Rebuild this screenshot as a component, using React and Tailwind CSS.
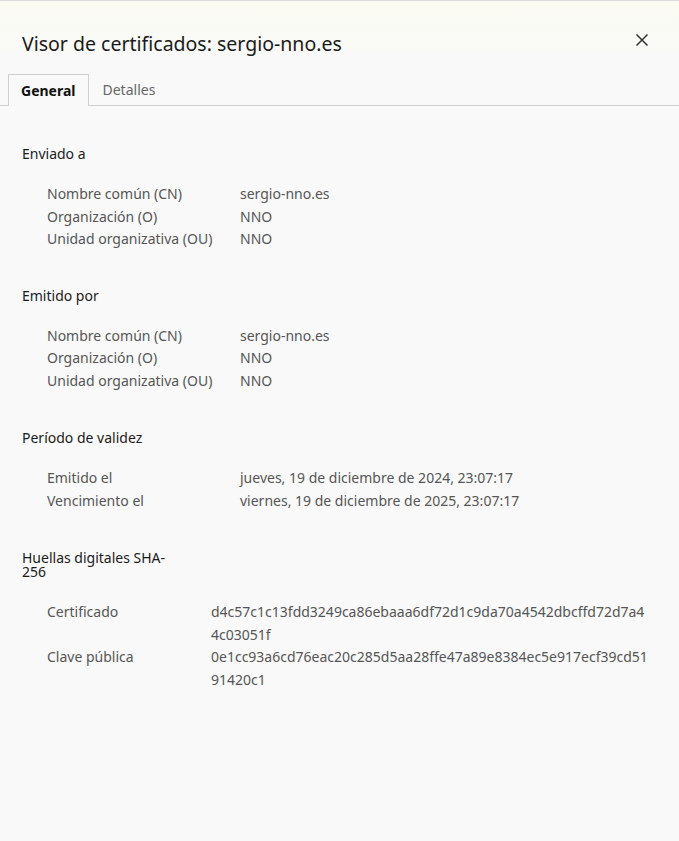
import React from "react";

const font = { fontFamily: '"Noto Sans", "Open Sans", sans-serif' };

function Section({ title, rows, valueX = "w-[193px]", titleW = "", extra = "" }) {
  return (
    <div className={`mb-[38px] ${extra}`}>
      <h2 className={`text-[14px] leading-[14px] text-[#1b1b1b] ${titleW}`}>{title}</h2>
      <div className="mt-[22px] pl-[25px] flex flex-col">
        {rows.map(([label, value]) => (
          <div key={label} className="flex text-[14px] leading-[22.5px] text-[#555]">
            <span className={`shrink-0 ${valueX}`}>{label}</span>
            <span className="break-all w-[441px]">{value}</span>
          </div>
        ))}
      </div>
    </div>
  );
}

export default function App() {
  return (
    <div style={font} className="w-[679px] h-[841px] bg-[#f9f9f9] border-t border-[#dcdcdc] flex overflow-hidden">
      <div className="flex-1 flex flex-col border-r border-[#e2e2e2]">
        <div className="h-[52px] bg-gradient-to-b from-[#fbfbf3] to-[#f9f9f7] flex items-end justify-between pl-[22px] pr-[30px]">
          <h1 className="text-[19.5px] leading-[24px] text-[#1a1a1a] mb-[-3px]">Visor de certificados: sergio-nno.es</h1>
          <svg width="14" height="14" viewBox="0 0 14 14" className="mb-[6px] mr-[2px]">
            <path d="M1.5 1.5 L12.5 12.5 M12.5 1.5 L1.5 12.5" stroke="#333" strokeWidth="1.5" />
          </svg>
        </div>

        <div className="mt-[21px] flex px-[8px] border-b border-[#cfcfcf] h-[32px]">
          <div className="px-[12px] border border-b-0 border-[#cfcfcf] bg-[#f9f9f9] -mb-px flex items-center text-[14px] font-bold text-[#111]">
            General
          </div>
          <div className="px-[14px] flex items-center text-[14px] text-[#666]">Detalles</div>
        </div>

        <div className="pl-[22px] pt-[41px]">
          <Section
            title="Enviado a"
            rows={[
              ["Nombre común (CN)", "sergio-nno.es"],
              ["Organización (O)", "NNO"],
              ["Unidad organizativa (OU)", "NNO"],
            ]}
          />
          <Section
            title="Emitido por"
            rows={[
              ["Nombre común (CN)", "sergio-nno.es"],
              ["Organización (O)", "NNO"],
              ["Unidad organizativa (OU)", "NNO"],
            ]}
          />
          <Section
            title="Período de validez"
            extra="pt-[1px]"
            rows={[
              ["Emitido el", "jueves, 19 de diciembre de 2024, 23:07:17"],
              ["Vencimiento el", "viernes, 19 de diciembre de 2025, 23:07:17"],
            ]}
          />
          <Section
            title="Huellas digitales SHA-256"
            titleW="w-[160px]"
            valueX="w-[164px]"
            extra="pt-[1px]"
            rows={[
              ["Certificado", "d4c57c1c13fdd3249ca86ebaaa6df72d1c9da70a4542dbcffd72d7a44c03051f"],
              ["Clave pública", "0e1cc93a6cd76eac20c285d5aa28ffe47a89e8384ec5e917ecf39cd5191420c1"],
            ]}
          />
        </div>
      </div>
      <div className="w-px bg-white" />
    </div>
  );
}
